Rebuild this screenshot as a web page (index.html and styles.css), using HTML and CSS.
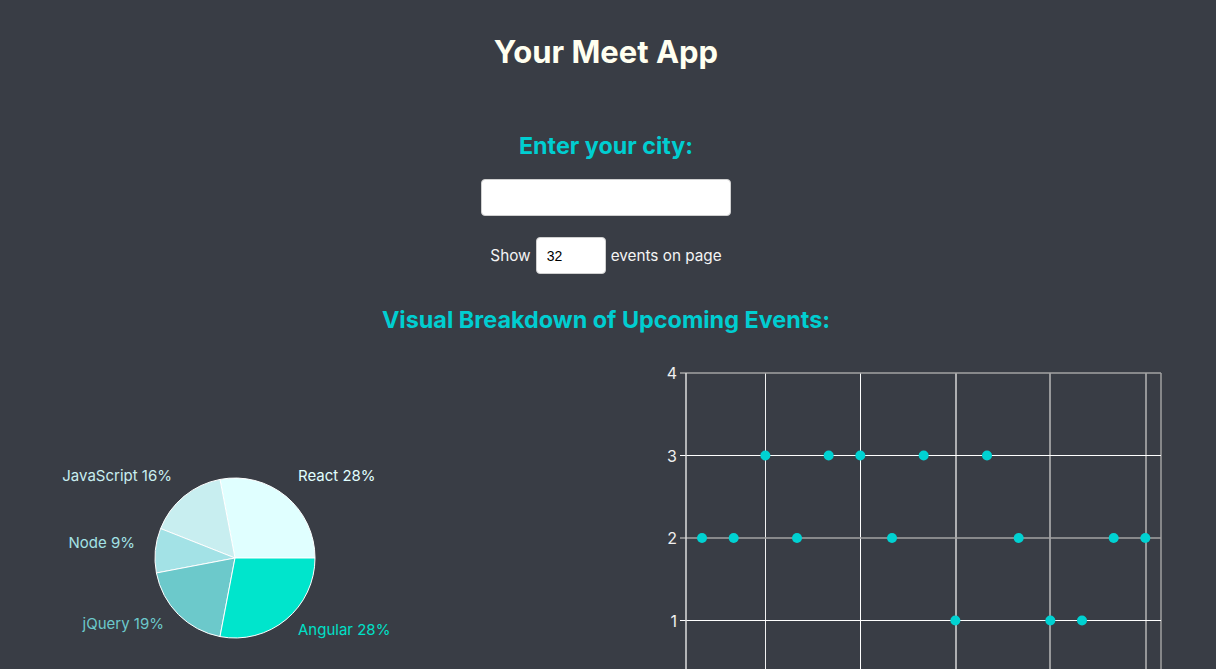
FILE: index.html
```html
<!DOCTYPE html>
<html>
<head>
<meta charset="utf-8">
<title>Your Meet App</title>
<link rel="stylesheet" href="styles.css">
</head>
<body>
<div class="app">
  <h1 class="title">Your Meet App</h1>
  <h2 class="subtitle">Enter your city:</h2>
  <input class="city-input" type="text">
  <div class="number-row">
    <span>Show</span>
    <input class="number-input" type="number" value="32">
    <span>events on page</span>
  </div>
  <h2 class="subtitle breakdown">Visual Breakdown of Upcoming Events:</h2>
  <div class="charts">
    <div class="chart">
      <svg class="chart-svg" width="608" height="400" viewBox="0 0 608 400">
        <g stroke="#ffffff" stroke-width="1">
          <path d="M235,205 L315,205 A80,80 0 0 0 220.01,126.42 Z" fill="#e0ffff"/>
          <path d="M235,205 L220.01,126.42 A80,80 0 0 0 160.62,175.55 Z" fill="#c8eef0"/>
          <path d="M235,205 L160.62,175.55 A80,80 0 0 0 156.42,219.99 Z" fill="#a3e2e6"/>
          <path d="M235,205 L156.42,219.99 A80,80 0 0 0 220.01,283.58 Z" fill="#6cc9cb"/>
          <path d="M235,205 L220.01,283.58 A80,80 0 0 0 315,205 Z" fill="#00e5cc"/>
        </g>
        <g class="pie-labels">
          <text x="298" y="128" fill="#e0ffff">React 28%</text>
          <text x="172" y="128" text-anchor="end" fill="#c8eef0">JavaScript 16%</text>
          <text x="135" y="195" text-anchor="end" fill="#a3e2e6">Node 9%</text>
          <text x="164" y="276" text-anchor="end" fill="#6cc9cb">jQuery 19%</text>
          <text x="298" y="282" fill="#00e0c8">Angular 28%</text>
        </g>
      </svg>
    </div>
    <div class="chart">
      <svg class="chart-svg" width="608" height="400" viewBox="0 0 608 400">
        <g fill="none" stroke-width="1">
          <line x1="157.5" y1="20" x2="157.5" y2="400" stroke="#f0f0f0"/>
          <line x1="252.5" y1="20" x2="252.5" y2="400" stroke="#ffffff"/>
          <line x1="348" y1="20" x2="348" y2="400" stroke="#d6d6d6" stroke-width="1.5"/>
          <line x1="442" y1="20" x2="442" y2="400" stroke="#b8b8b8" stroke-width="1.5"/>
          <line x1="538" y1="20" x2="538" y2="400" stroke="#b4b4b4" stroke-width="1.5"/>
          <line x1="553" y1="20" x2="553" y2="400" stroke="#a0a0a0" stroke-width="1.5"/>
          <line x1="72" y1="20" x2="553" y2="20" stroke="#a3a3a3" stroke-width="1.5"/>
          <line x1="72" y1="102.5" x2="553" y2="102.5" stroke="#ffffff"/>
          <line x1="72" y1="185" x2="553" y2="185" stroke="#a3a3a3" stroke-width="1.5"/>
          <line x1="72" y1="267.5" x2="553" y2="267.5" stroke="#ffffff"/>
          <line x1="78" y1="20" x2="78" y2="400" stroke="#dcdcdc" stroke-width="1.5"/>
        </g>
        <g class="axis-labels" text-anchor="end">
          <text x="69" y="26">4</text>
          <text x="69" y="108.5">3</text>
          <text x="69" y="191">2</text>
          <text x="69" y="273.5">1</text>
        </g>
        <g fill="#00d2d2">
          <circle cx="94" cy="185" r="5"/>
          <circle cx="125.67" cy="185" r="5"/>
          <circle cx="157.33" cy="102.5" r="5"/>
          <circle cx="189" cy="185" r="5"/>
          <circle cx="220.67" cy="102.5" r="5"/>
          <circle cx="252.33" cy="102.5" r="5"/>
          <circle cx="284" cy="185" r="5"/>
          <circle cx="315.67" cy="102.5" r="5"/>
          <circle cx="347.33" cy="267.5" r="5"/>
          <circle cx="379" cy="102.5" r="5"/>
          <circle cx="410.67" cy="185" r="5"/>
          <circle cx="442.33" cy="267.5" r="5"/>
          <circle cx="474" cy="267.5" r="5"/>
          <circle cx="505.67" cy="185" r="5"/>
          <circle cx="537.33" cy="185" r="5"/>
        </g>
      </svg>
    </div>
  </div>
</div>
</body>
</html>
```

FILE: styles.css
```css
html, body {
  margin: 0;
  padding: 0;
  background: #393d45;
  overflow: hidden;
}

body {
  font-family: Inter, "Noto Sans", "Liberation Sans", sans-serif;
  color: #f4f4f4;
}

.app {
  display: flex;
  flex-direction: column;
  align-items: center;
  text-align: center;
}

.title,
.subtitle,
.city-input,
.number-row {
  position: relative;
  left: -2px;
}

.title {
  margin: 32px 0 0 0;
  height: 40px;
  line-height: 40px;
  font-size: 31px;
  font-weight: 700;
  color: #fffff0;
}

.subtitle {
  margin: 59px 0 0 0;
  height: 30px;
  line-height: 30px;
  font-size: 23.3px;
  font-weight: 700;
  color: #00ced1;
}

.breakdown {
  margin-top: 31px;
  font-size: 23.4px;
}

.city-input {
  margin-top: 18px;
  box-sizing: border-box;
  width: 250px;
  height: 37px;
  border: 1px solid #d0d0d0;
  border-radius: 4px;
  background: #ffffff;
}

.number-row {
  margin-top: 21px;
  display: flex;
  align-items: center;
  gap: 5px;
  font-size: 15.3px;
  color: #f4f4f4;
}

.number-input {
  box-sizing: border-box;
  width: 70px;
  height: 37px;
  padding: 0 0 0 10px;
  border: 1px solid #d0d0d0;
  border-radius: 4px;
  background: #ffffff;
  font-family: "Liberation Sans", Arial, sans-serif;
  font-size: 14px;
  color: #000;
  -moz-appearance: textfield;
}

.number-input::-webkit-inner-spin-button,
.number-input::-webkit-outer-spin-button {
  -webkit-appearance: none;
  margin: 0;
}

.charts {
  margin-top: 18px;
  width: 100%;
  display: flex;
}

.chart {
  flex: 1 1 50%;
  height: 400px;
}

.chart-svg {
  display: block;
}

.pie-labels text {
  font-family: Inter, "Noto Sans", sans-serif;
  font-size: 15px;
}

.axis-labels text {
  font-family: Inter, "Noto Sans", sans-serif;
  font-size: 16px;
  fill: #f0f0f0;
}
```
